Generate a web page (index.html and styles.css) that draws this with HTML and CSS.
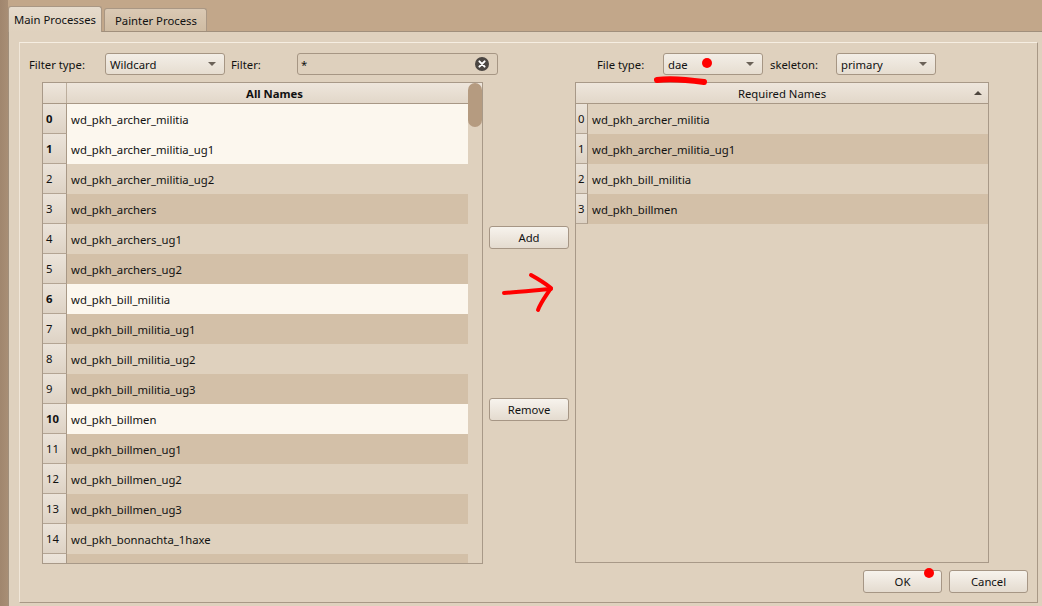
FILE: index.html
```html
<!DOCTYPE html>
<html>
<head>
<meta charset="utf-8">
<link rel="stylesheet" href="styles.css">
</head>
<body>
<div class="app">
  <div class="tabbar">
    <div class="tab active">Main Processes</div>
    <div class="tab">Painter Process</div>
  </div>
  <div class="pane">
    <div class="frame">
      <div class="main">
        <div class="left">
          <div class="toolrow">
            <span class="lbl lbl-ft">Filter type:</span>
            <div class="combo combo-wild"><span>Wildcard</span><span class="arrow"></span></div>
            <span class="lbl lbl-f">Filter:</span>
            <div class="search"><span>*</span>
              <svg class="clear" width="14" height="14" viewBox="0 0 14 14"><circle cx="7" cy="7" r="7" fill="#4b4642"/><path d="M4.4 4.4 L9.6 9.6 M9.6 4.4 L4.4 9.6" stroke="#fff" stroke-width="2" stroke-linecap="round"/></svg>
            </div>
          </div>
          <div class="table tbl-left">
            <div class="thead">
              <div class="corner"></div>
              <div class="hsec bold">All Names</div>
            </div>
            <div class="tbody">
              <div class="row sel"><div class="vh b">0</div><div class="cell">wd_pkh_archer_militia</div></div>
              <div class="row sel"><div class="vh b">1</div><div class="cell">wd_pkh_archer_militia_ug1</div></div>
              <div class="row"><div class="vh">2</div><div class="cell">wd_pkh_archer_militia_ug2</div></div>
              <div class="row alt"><div class="vh">3</div><div class="cell">wd_pkh_archers</div></div>
              <div class="row"><div class="vh">4</div><div class="cell">wd_pkh_archers_ug1</div></div>
              <div class="row alt"><div class="vh">5</div><div class="cell">wd_pkh_archers_ug2</div></div>
              <div class="row sel"><div class="vh b">6</div><div class="cell">wd_pkh_bill_militia</div></div>
              <div class="row alt"><div class="vh">7</div><div class="cell">wd_pkh_bill_militia_ug1</div></div>
              <div class="row"><div class="vh">8</div><div class="cell">wd_pkh_bill_militia_ug2</div></div>
              <div class="row alt"><div class="vh">9</div><div class="cell">wd_pkh_bill_militia_ug3</div></div>
              <div class="row sel"><div class="vh b">10</div><div class="cell">wd_pkh_billmen</div></div>
              <div class="row alt"><div class="vh">11</div><div class="cell">wd_pkh_billmen_ug1</div></div>
              <div class="row"><div class="vh">12</div><div class="cell">wd_pkh_billmen_ug2</div></div>
              <div class="row alt"><div class="vh">13</div><div class="cell">wd_pkh_billmen_ug3</div></div>
              <div class="row"><div class="vh">14</div><div class="cell">wd_pkh_bonnachta_1haxe</div></div>
              <div class="row alt"><div class="vh"></div><div class="cell"></div></div>
            </div>
            <div class="vscroll"><div class="handle"></div></div>
          </div>
        </div>
        <div class="mid">
          <div class="btn btn-add">Add</div>
          <div class="btn btn-remove">Remove</div>
        </div>
        <div class="right">
          <div class="toolrow toolrow-r">
            <span class="lbl lbl-type">File type:</span>
            <div class="combo combo-dae"><span>dae</span><span class="arrow"></span></div>
            <span class="lbl lbl-skel">skeleton:</span>
            <div class="combo combo-prim"><span>primary</span><span class="arrow"></span></div>
          </div>
          <div class="table tbl-right">
            <div class="thead">
              <div class="hsec">Required Names</div>
              <span class="sortup"></span>
            </div>
            <div class="tbody">
              <div class="row"><div class="vh">0</div><div class="cell">wd_pkh_archer_militia</div></div>
              <div class="row alt"><div class="vh">1</div><div class="cell">wd_pkh_archer_militia_ug1</div></div>
              <div class="row"><div class="vh">2</div><div class="cell">wd_pkh_bill_militia</div></div>
              <div class="row alt"><div class="vh">3</div><div class="cell">wd_pkh_billmen</div></div>
            </div>
          </div>
        </div>
      </div>
      <div class="footer">
        <div class="btn btn-ok">OK</div>
        <div class="btn btn-cancel">Cancel</div>
      </div>
    </div>
  </div>
  <svg class="annot" width="1042" height="606" viewBox="0 0 1042 606">
    <circle cx="707" cy="63" r="5" fill="#ff0000"/>
    <path d="M657 80 C 670 78, 690 80, 704 82" stroke="#ff0000" stroke-width="6" stroke-linecap="round" fill="none"/>
    <path d="M504 293 C 520 292, 538 290, 551 289" stroke="#ff0000" stroke-width="4" stroke-linecap="round" fill="none"/>
    <path d="M531 275 C 540 280, 546 284, 551 288 C 546 296, 541 302, 538 310" stroke="#ff0000" stroke-width="4" stroke-linecap="round" stroke-linejoin="round" fill="none"/>
    <circle cx="929" cy="573" r="5" fill="#ff0000"/>
  </svg>
</div>
</body>
</html>
```

FILE: styles.css
```css
* { box-sizing: border-box; }
html, body {
  margin: 0;
  padding: 0;
  width: 1042px;
  height: 606px;
  overflow: hidden;
}
body {
  font-family: "Noto Sans", "Open Sans", sans-serif;
  font-size: 11.3px;
  color: #111;
  background: linear-gradient(to right, #a0866e 0, #a88e75 8px, #c2a78a 8px, #c3a98c 100%);
}
.app {
  position: relative;
  width: 1042px;
  height: 606px;
  display: flex;
  flex-direction: column;
}
.tabbar {
  height: 31px;
  display: flex;
  align-items: flex-end;
  gap: 2px;
  background: #c2a78a;
  margin-left: 8px;
}
.tab {
  height: 23px;
  display: flex;
  align-items: center;
  white-space: nowrap;
  border: 1px solid #a99784;
  border-bottom: none;
  border-radius: 3px 3px 0 0;
  background: linear-gradient(#dac9b4, #cfbca3);
  color: #111;
}
.tab.active {
  height: 26px;
  margin-bottom: -1px;
  padding-left: 5px;
  width: 94px;
  background: linear-gradient(#e6dbcc, #dfd1be);
  position: relative;
  z-index: 1;
}
.tab:not(.active) { width: 103px; padding-left: 10px; }
.pane {
  flex: 1;
  margin-left: 8px;
  border-top: 1px solid #a08f7c;
  border-left: 1px solid #a08f7c;
  background: #dfd1be;
  padding: 10px 4px 3px 10px;
  display: flex;
}
.frame {
  flex: 1;
  border: 1px solid #a89886;
  border-top-color: #f6eee2;
  border-left-color: #f1e7d9;
  display: flex;
  flex-direction: column;
}
.main {
  display: flex;
  padding-top: 10px;
}
.left {
  width: 463px;
  flex: none;
  padding-left: 9px;
  display: flex;
  flex-direction: column;
}
.toolrow {
  height: 22px;
  display: flex;
  align-items: center;
  margin-bottom: 7px;
}
.lbl { white-space: nowrap; flex: none; }
.lbl-ft { width: 76px; }
.lbl-f { width: 72px; padding-left: 6px; }
.combo {
  height: 22px;
  flex: none;
  border: 1px solid #a69684;
  border-radius: 3px;
  background: linear-gradient(#f3eee7, #e6ddd0);
  display: flex;
  align-items: center;
  justify-content: space-between;
  padding: 0 8px 0 4px;
}
.arrow {
  width: 0;
  height: 0;
  border-left: 4px solid transparent;
  border-right: 4px solid transparent;
  border-top: 4px solid #6b6258;
}
.combo-wild { width: 120px; }
.search {
  width: 201px;
  height: 22px;
  flex: none;
  border: 1px solid #a69684;
  border-radius: 3px;
  background: #ded0bd;
  display: flex;
  align-items: center;
  justify-content: space-between;
  padding: 0 8px 0 3px;
}
.clear { display: block; }
.table {
  position: relative;
  border: 1px solid #a89988;
  background: #dfd1be;
  display: flex;
  flex-direction: column;
  height: 482px;
  overflow: hidden;
}
.tbl-left { width: 441px; margin-left: 13px; }
.thead {
  height: 21px;
  flex: none;
  display: flex;
  border-bottom: 1px solid #a89886;
  background: linear-gradient(#eee6dc, #e2d7c9);
  position: relative;
}
.corner { width: 24px; border-right: 1px solid #bcae9d; }
.hsec {
  flex: 1;
  display: flex;
  align-items: center;
  justify-content: center;
}
.bold { font-weight: bold; }
.tbody { flex: 1; overflow: hidden; }
.tbl-left .tbody { padding-right: 14px; }
.row {
  height: 30px;
  display: flex;
  background: #dfd1be;
}
.row.alt { background: #d3c0a8; }
.row.sel { background: #fcf7ee; }
.vh {
  width: 24px;
  flex: none;
  border-right: 1px solid #a89886;
  border-bottom: 1px solid #b3a493;
  background: linear-gradient(#ece4da, #ddd2c4);
  display: flex;
  align-items: center;
  padding-left: 3px;
}
.vh.b { font-weight: bold; }
.cell {
  flex: 1;
  display: flex;
  align-items: center;
  padding-left: 4px;
  white-space: nowrap;
}
.vscroll {
  position: absolute;
  top: 0;
  right: 0;
  width: 14px;
  bottom: 0;
}
.handle {
  width: 14px;
  height: 44px;
  border-radius: 7px;
  background: #b59b80;
}
.mid {
  width: 80px;
  flex: none;
  margin-left: 6px;
  display: flex;
  flex-direction: column;
}
.btn {
  height: 23px;
  width: 80px;
  border: 1px solid #a69685;
  border-radius: 3px;
  background: linear-gradient(#f7f3ed, #e4dbcf);
  display: flex;
  align-items: center;
  justify-content: center;
}
.btn-add { margin-top: 173px; }
.btn-remove { margin-top: 149px; }
.right {
  margin-left: 6px;
  display: flex;
  flex-direction: column;
}
.toolrow-r { padding-left: 22px; }
.lbl-type { width: 66px; }
.lbl-skel { width: 73px; padding-left: 7px; }
.combo-dae { width: 100px; }
.combo-prim { width: 100px; }
.tbl-right { width: 414px; height: 481px; }
.tbl-right .vh { width: 12px; padding-left: 2px; }
.sortup {
  position: absolute;
  right: 6px;
  top: 8px;
  width: 0;
  height: 0;
  border-left: 4px solid transparent;
  border-right: 4px solid transparent;
  border-bottom: 4px solid #4e463e;
}
.footer {
  display: flex;
  justify-content: flex-end;
  gap: 7px;
  padding: 6px 9px 0 0;
}
.btn-ok, .btn-cancel { width: 79px; }
.annot {
  position: absolute;
  left: 0;
  top: 0;
  pointer-events: none;
}
```
